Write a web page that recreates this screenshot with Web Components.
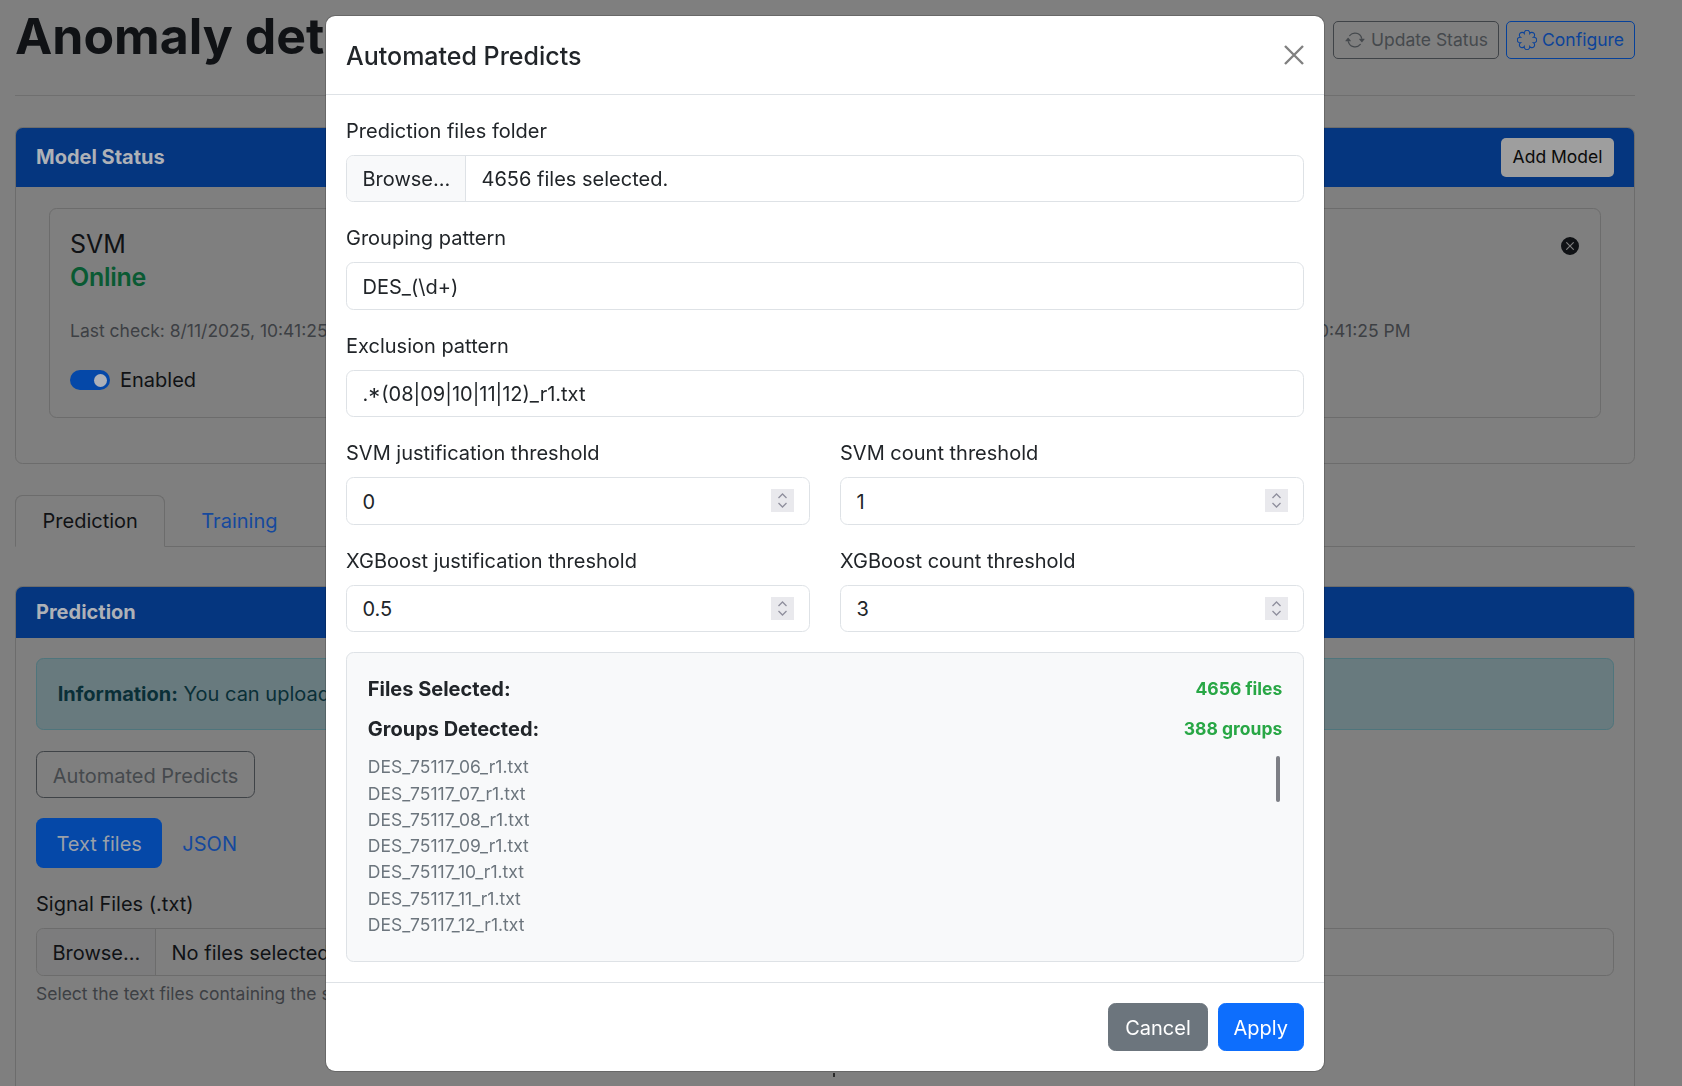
<!DOCTYPE html>
<html lang="en"><head><meta charset="utf-8"><title>Anomaly detection</title>
<style>
html,body{margin:0;height:1086px;overflow:hidden;background:#7f7f7f}
body{font:400 20px/30px Inter,"Liberation Sans",sans-serif;color:#101215}
</style></head><body>
<app-root></app-root>
<script>
const def=(n,css,html)=>{customElements.define(n,class extends HTMLElement{constructor(){super();const r=this.attachShadow({mode:'open'});r.innerHTML='<style>'+css+'</style>'+(typeof html==='function'?html(this):html);}})};
const arrow='<svg width="20" height="20" viewBox="0 0 16 16" fill="currentColor"><path d="M11.534 7h3.932a.25.25 0 0 1 .192.41l-1.966 2.36a.25.25 0 0 1-.384 0l-1.966-2.36a.25.25 0 0 1 .192-.41zm-11 2h3.932a.25.25 0 0 0 .192-.41L2.692 6.23a.25.25 0 0 0-.384 0L.342 8.59A.25.25 0 0 0 .534 9z"/><path fill-rule="evenodd" d="M8 3c-1.552 0-2.94.707-3.857 1.818a.5.5 0 1 1-.771-.636A6.002 6.002 0 0 1 13.917 7H12.9A5.002 5.002 0 0 0 8 3zM3.1 9a5.002 5.002 0 0 0 8.757 2.182.5.5 0 1 1 .771.636A6.002 6.002 0 0 1 2.083 9H3.1z"/></svg>';
let sc='';const pt=i=>{const a=(i*45+22.5)*Math.PI/180;return (8+5.7*Math.cos(a)).toFixed(2)+' '+(8+5.7*Math.sin(a)).toFixed(2)};
for(let i=0;i<=8;i++){sc+=(i?'A2.2 2.2 0 1 1 ':'M')+pt(i%8);}sc+='Z';
const gear='<svg width="20" height="20" viewBox="0 0 16 16" fill="none" stroke="currentColor" stroke-width=".85"><path d="'+sc+'"/></svg>';

def('ui-btn',`:host{display:inline-flex;box-sizing:border-box;align-items:center;justify-content:center;gap:var(--g,4px);border:1.25px solid var(--b,transparent);background:var(--bg,transparent);color:var(--c,inherit);border-radius:var(--r,7.5px);padding:var(--p,8.5px 15.75px 6.5px);font-size:var(--f,20px);font-weight:400;line-height:var(--l,30px);white-space:nowrap}`,'<slot></slot>');

def('page-head',`:host{display:block;border-bottom:1.25px solid #6f6f6f;height:95px;box-sizing:content-box;margin-bottom:30.75px}
.r{display:flex;justify-content:space-between;align-items:flex-start;padding-top:6px}
h1{margin:0;font:700 50px/60px Inter,sans-serif;color:#101215;white-space:nowrap}
.b{display:flex;gap:6.5px;margin-top:15px}
ui-btn{--f:17.5px;--l:26.25px;--p:5px 10px 5px 11px;--r:5px;--g:5.5px}`,
`<div class="r"><h1>Anomaly detection</h1><div class="b">
<ui-btn style="--b:#3f4347;--c:#45494d">${arrow}Update Status</ui-btn>
<ui-btn style="--b:#06419a;--c:#0c4399;--p:5px 10px">${gear}Configure</ui-btn></div></div>`);

def('ui-card',`:host{display:block;border:1.25px solid #6c6c6c;border-radius:7.5px;background:#7f7f7f;overflow:hidden}
header{display:flex;justify-content:space-between;align-items:center;background:#05367f;padding:var(--hp,10px 20px);color:#aeb1b7;font-weight:700;font-size:20px;line-height:30px}
.b{padding:var(--bp,20px)}`,
c=>`<header><span>${c.getAttribute('heading')}</span><slot name="action"></slot></header><div class="b"><slot></slot></div>`);

def('toggle-switch',`:host{display:flex;align-items:center;gap:10px;font-size:20px;line-height:30px}
i{width:40px;height:20px;border-radius:10px;background:#0548a8;position:relative;display:block}
i::after{content:"";position:absolute;right:3.5px;top:3.5px;width:13px;height:13px;border-radius:50%;background:#adb1b8}`,'<i></i><slot></slot>');

def('model-panel',`:host{display:flex;border:1.25px solid #6c6c6c;border-radius:7.5px;height:210px;box-sizing:border-box;padding:20px;justify-content:space-between}
h5{margin:0;font:400 25px/30px Inter,sans-serif;color:#101215}
.on{font:600 25px/30px Inter,sans-serif;color:#0a5a33;margin-top:3px;letter-spacing:-.3px}
.t{font-size:17.5px;line-height:26.25px;color:#3d4044;margin-top:26px;white-space:nowrap}
toggle-switch{margin-top:21.5px}
.right{position:relative;width:459px}
svg{position:absolute;right:1px;top:8px}`,
`<div><h5>SVM</h5><div class="on">Online</div><div class="t">Last check: 8/11/2025, 10:41:25 PM</div><toggle-switch>Enabled</toggle-switch></div>
<div class="right"><h5>XGBoost</h5><div class="on">Online</div><div class="t">Last check: 8/11/2025, 10:41:25 PM</div><toggle-switch>Enabled</toggle-switch>
<svg width="18" height="18" viewBox="0 0 16 16" fill="#101215"><path d="M16 8A8 8 0 1 1 0 8a8 8 0 0 1 16 0zM5.354 4.646a.5.5 0 1 0-.708.708L7.293 8l-2.647 2.646a.5.5 0 0 0 .708.708L8 8.707l2.646 2.647a.5.5 0 0 0 .708-.708L8.707 8l2.647-2.646a.5.5 0 0 0-.708-.708L8 7.293 5.354 4.646z"/></svg></div>`);

def('tab-bar',`:host{display:flex;border-bottom:1.25px solid #6c6c6c;height:51px;margin:31px 0 39.25px;box-sizing:content-box}
a{display:block;padding:11.5px 27px 0;height:51px;box-sizing:border-box;margin:0 10px 0 0;color:#15499d}
a.on{color:#101215;border:1.25px solid #6c6c6c;border-bottom-color:#7f7f7f;border-radius:7.5px 7.5px 0 0;height:52.25px;padding:10.5px 26.5px 0;margin-right:9px}`,
'<a class="on">Prediction</a><a>Training</a>');

def('file-input',`:host{display:flex;border:1.25px solid var(--bd,#dee2e6);border-radius:7.5px;height:47.5px;box-sizing:border-box;overflow:hidden;background:var(--fb,#fff);color:var(--fc,#212529)}
b{font-weight:400;background:var(--bb,#f8f9fa);padding:8.5px 14.75px 0 15.5px;border-right:1.25px solid var(--bd,#dee2e6);white-space:nowrap;line-height:30px}
span{padding:8.5px 15.5px 0;white-space:nowrap;line-height:30px}`,
c=>`<b>Browse...</b><span>${c.getAttribute('value')}</span>`);

def('prediction-panel',`:host{display:block}
.a{background:#687a7e;border:1.25px solid #4f757c;border-radius:7.5px;height:72px;box-sizing:border-box;padding:20.5px 20.75px 0;color:#0a2f37;white-space:nowrap;line-height:30px;overflow:hidden}
b{font-weight:700}
.auto{margin-top:21px;display:flex;width:max-content;box-sizing:border-box}
.pills{display:flex;margin-top:20px;align-items:center}
.hint{font-size:17.5px;line-height:26.25px;color:#3d4044;margin-top:5px;white-space:nowrap}
label{display:block;margin:20px 0 10px;color:#101215;height:30px;line-height:32px}
a{color:#15499d;padding:2px 20px 0}
ui-btn{height:47.5px}
i{display:block;width:2px;height:4px;background:#2a2a2a;margin:66px 0 0 797px}`,
`<div class="a"><b>Information:</b> You can upload signal files for prediction.</div>
<ui-btn class="auto" style="--b:#3f4347;--c:#45494d">Automated Predicts</ui-btn>
<div class="pills"><ui-btn style="--bg:#0548a8;--c:#9aa0a8;height:50px;--p:8.5px 19.5px 6.5px">Text files</ui-btn><a>JSON</a></div>
<label>Signal Files (.txt)</label>
<file-input value="No files selected." style="--bd:#6c6c6c;--fb:#7f7f7f;--bb:#7c7c7d;--fc:#101215"></file-input>
<div class="hint">Select the text files containing the signals to analyse.</div><i></i>`);

def('text-field',`:host{display:block;margin-bottom:20px}
label{display:block;margin-bottom:10px;color:#212529;line-height:32px;height:30px}
.i{position:relative;border:1.25px solid #dee2e6;border-radius:7.5px;height:47.5px;box-sizing:border-box;padding:8.5px 15.5px 0;line-height:30px;color:#212529;background:#fff}
svg{position:absolute;right:15px;top:11px;background:#e9e9ed}
s{text-decoration:none;display:inline-block;font-size:24px;line-height:20px;transform:translateY(5px);margin-right:1px}`,
c=>`<label>${c.getAttribute('label')}</label><slot name="ctl"><div class="i">${(c.getAttribute('value')||'').replace('*','<s>*</s>')}${c.hasAttribute('number')?'<svg width="23" height="23" viewBox="0 0 23 23" fill="none" stroke="#8f8f9d" stroke-width="1.3"><path d="M7.5 9 11.5 5l4 4M7.5 14l4 4 4-4"/></svg>':''}</div></slot>`);

def('group-summary',`:host{display:block;background:#f8f9fa;border:1.25px solid #dee2e6;border-radius:7.5px;padding:21px 20.75px 0;box-sizing:border-box;height:309.75px;color:#212529}
.r{display:flex;justify-content:space-between;align-items:center;line-height:30px;font-weight:700;margin-bottom:10px;color:#212529}
.r span{font-size:17.5px;color:#28a745;font-weight:700}
.l{position:relative;height:187.5px;overflow:hidden;font-size:17.5px;line-height:26.25px;color:#6c757d}
.l div{white-space:nowrap}
i{position:absolute;right:2px;top:2px;width:4px;height:46px;border-radius:2px;background:#7d7f85}`,
`<div class="r">Files Selected:<span>4656 files</span></div>
<div class="r">Groups Detected:<span>388 groups</span></div>
<div class="l"><div>DES_75117_06_r1.txt</div><div>DES_75117_07_r1.txt</div><div>DES_75117_08_r1.txt</div><div>DES_75117_09_r1.txt</div><div>DES_75117_10_r1.txt</div><div>DES_75117_11_r1.txt</div><div>DES_75117_12_r1.txt</div><i></i></div>`);

def('modal-dialog',`:host{position:fixed;inset:0;display:flex;justify-content:center;align-items:flex-start;padding:15px 32px 0 0;box-sizing:border-box}
.m{width:1000px;background:#fff;border:1.25px solid rgba(0,0,0,.175);background-clip:padding-box;border-radius:10px;box-sizing:border-box;color:#212529}
header{display:flex;justify-content:space-between;align-items:center;padding:20px;height:78.75px;box-sizing:border-box;border-bottom:1.25px solid #dee2e6}
h5{margin:4px 0 0;font:500 25px/37.5px Inter,sans-serif;color:#212529}
.body{padding:20px}
.two{display:grid;grid-template-columns:1fr 1fr;column-gap:30px}
footer{display:flex;justify-content:flex-end;gap:10px;border-top:1.25px solid #dee2e6;padding:20px;height:88.75px;box-sizing:border-box}
svg.x{display:block}
ui-btn{height:47.5px}`,
`<div class="m"><header><h5>Automated Predicts</h5><svg class="x" width="20" height="20" viewBox="0 0 20 20" stroke="#808080" stroke-width="2.4" fill="none"><path d="M1 1l18 18M19 1 1 19"/></svg></header>
<div class="body">
<text-field label="Prediction files folder"><file-input slot="ctl" value="4656 files selected."></file-input></text-field>
<text-field label="Grouping pattern" value="DES_(\\d+)"></text-field>
<text-field label="Exclusion pattern" value=".*(08|09|10|11|12)_r1.txt"></text-field>
<div class="two">
<text-field number label="SVM justification threshold" value="0"></text-field>
<text-field number label="SVM count threshold" value="1"></text-field>
<text-field number label="XGBoost justification threshold" value="0.5"></text-field>
<text-field number label="XGBoost count threshold" value="3"></text-field>
</div>
<group-summary></group-summary>
</div>
<footer><ui-btn style="--bg:#6c757d;--c:#fff;--b:#6c757d">Cancel</ui-btn><ui-btn style="--bg:#0d6efd;--c:#fff;--b:#0d6efd;--p:8.5px 15px 6.5px">Apply</ui-btn></footer>
</div>`);

def('app-root',`:host{display:block;padding:0 47px 0 15px;height:1086px;overflow:hidden;box-sizing:border-box}
ui-btn.add{--bg:#9e9e9e;--c:#0b0b0b;--p:5px 10.5px;--f:17.5px;--l:26.25px;--r:5px;height:38.75px}
.ms{--bp:21px 33px 45px}
.pc{--bp:20px}`,
`<page-head></page-head>
<ui-card class="ms" heading="Model Status"><ui-btn slot="action" class="add">Add Model</ui-btn><model-panel></model-panel></ui-card>
<tab-bar></tab-bar>
<ui-card class="pc" heading="Prediction" style="--hp:10.5px 20px;height:600px"><prediction-panel></prediction-panel></ui-card>
<modal-dialog></modal-dialog>`);
</script>
</body></html>
